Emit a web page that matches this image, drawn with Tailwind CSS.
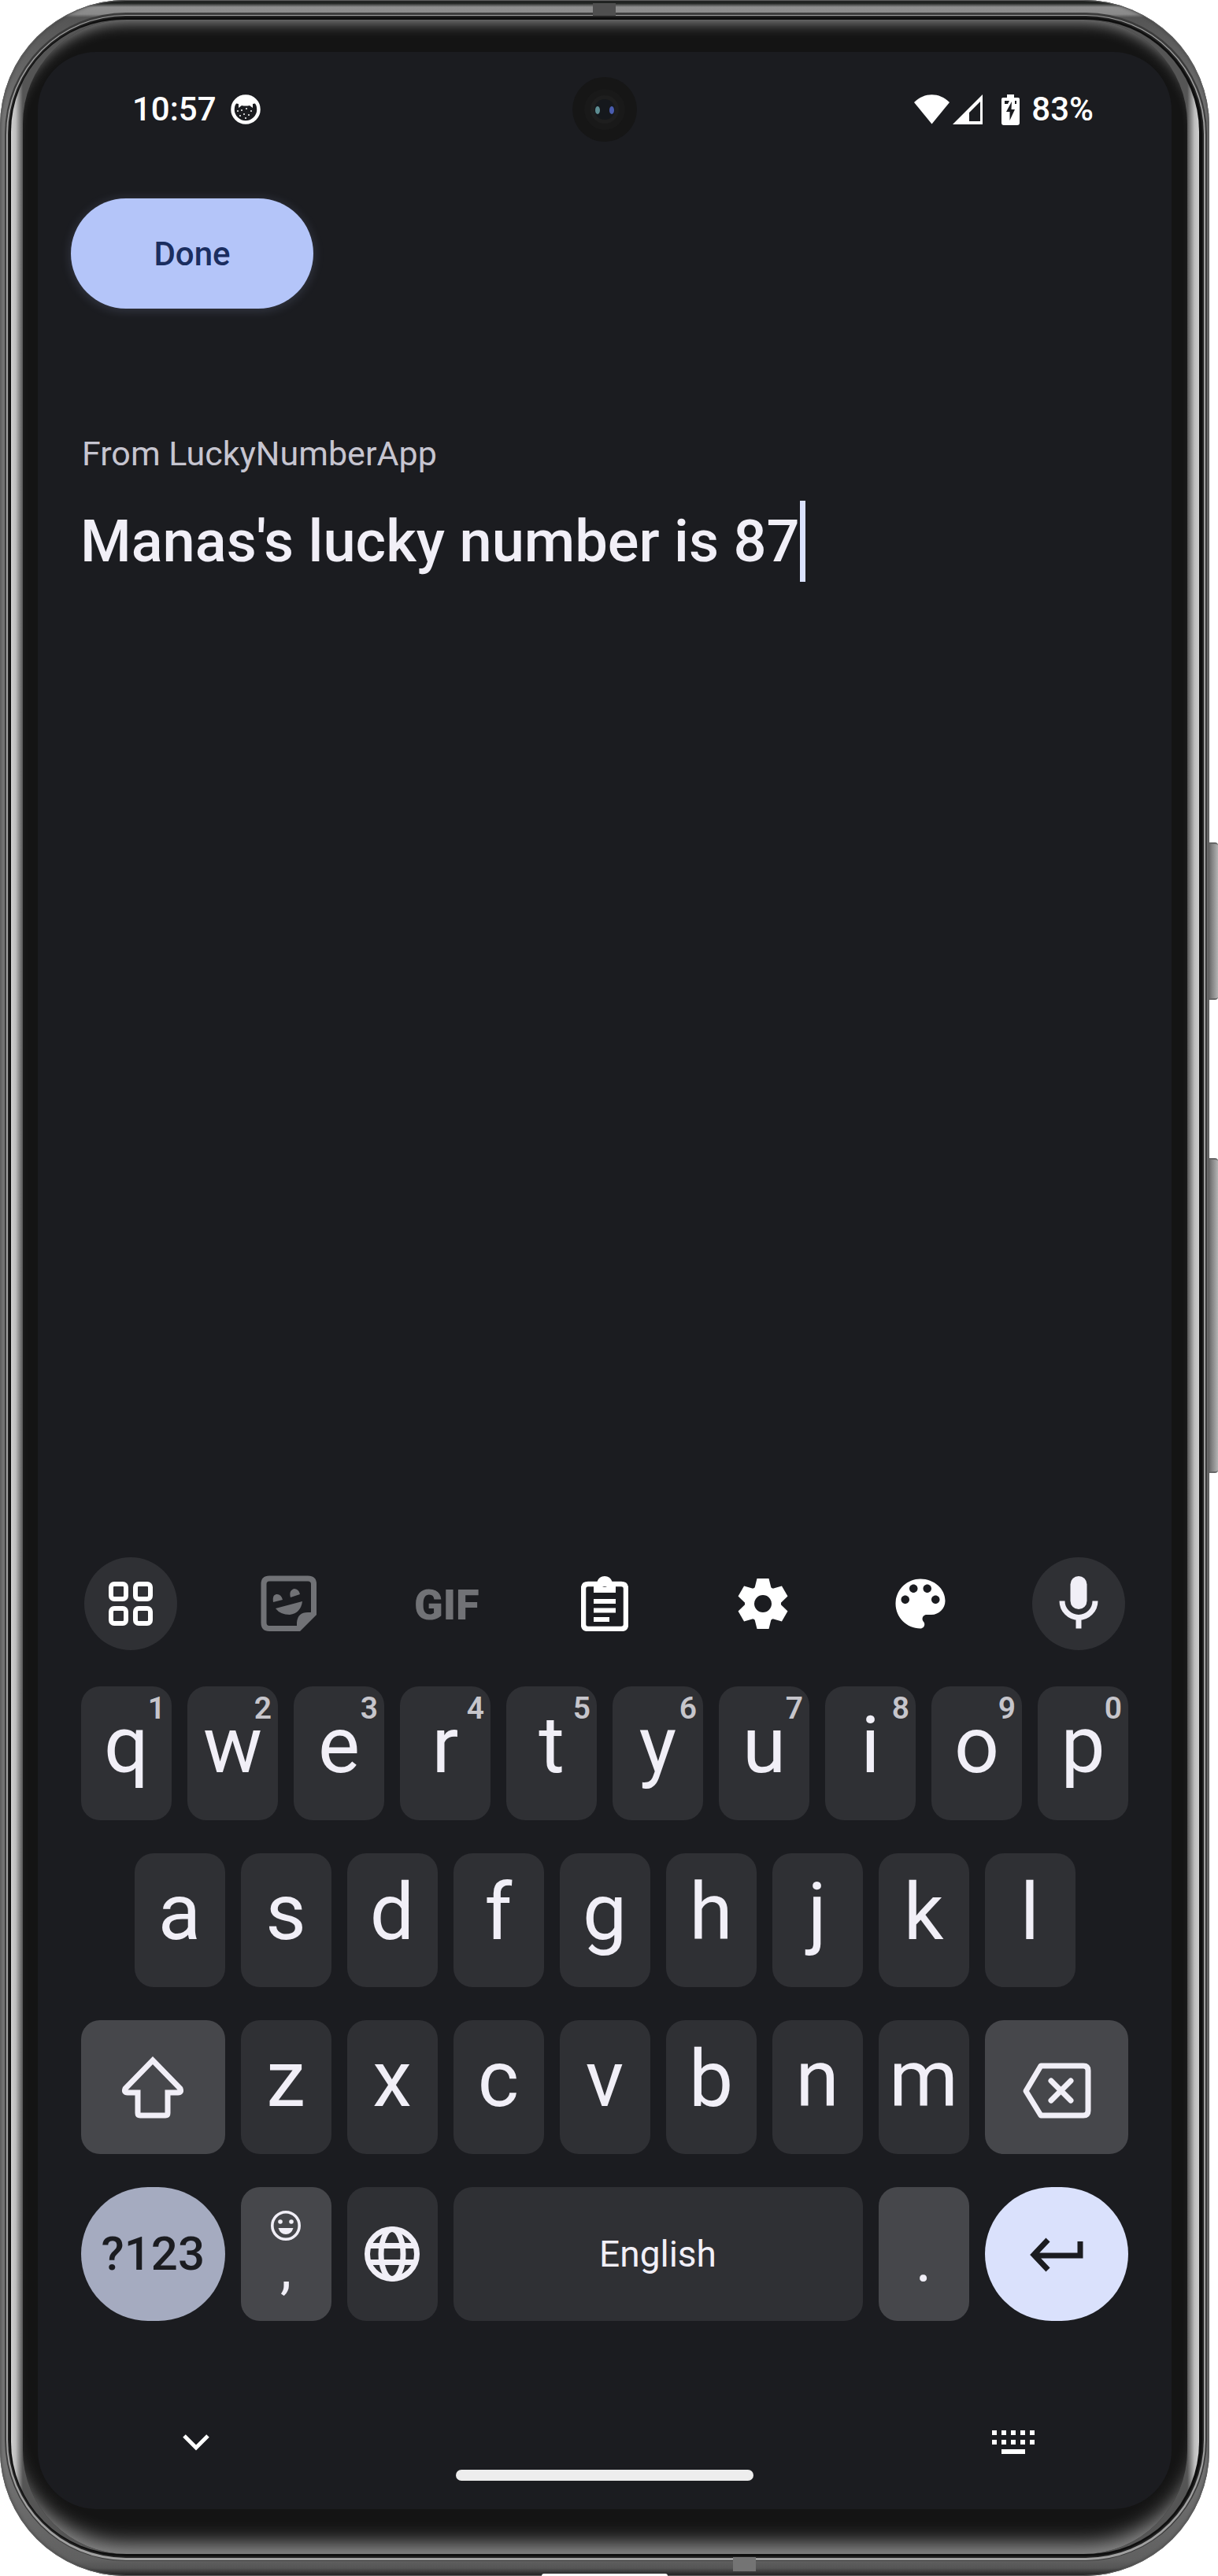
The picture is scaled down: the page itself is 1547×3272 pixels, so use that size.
<!DOCTYPE html>
<html lang="en">
<head>
<meta charset="utf-8">
<meta name="viewport" content="width=device-width, initial-scale=1">
<title>Lucky number note</title>
<script src="https://cdn.jsdelivr.net/npm/@tailwindcss/browser@4"></script>
</head>
<body class="min-h-screen flex flex-col bg-white font-[Roboto,sans-serif] text-[#f1eff7]">
<div class="relative flex-1 flex flex-col pr-[11px]">
  <!-- side buttons -->
  <div class="absolute right-0 top-[1070px] w-[16px] h-[200px] rounded-[4px] bg-linear-to-r from-[#444] via-[#808080] to-[#b4b4b4] border-y-2 border-[#666]"></div>
  <div class="absolute right-0 top-[1471px] w-[16px] h-[400px] rounded-[4px] bg-linear-to-r from-[#444] via-[#808080] to-[#b4b4b4] border-y-2 border-[#666]"></div>

  <!-- metal frame -->
  <div class="relative flex-1 flex flex-col rounded-[160px] pt-[22px] pb-[25px] pl-[12px] pr-[9px] bg-[linear-gradient(180deg,#1f2220_4px,#8f8f8f_9px,#8a8a8a_18px,#555_22px,#757575_150px,#757575_calc(100%-150px),#606060_calc(100%-20px),#555_calc(100%-10px),#1c1c1c_100%)] shadow-[inset_0_0_0_1px_#606060,inset_0_0_4px_#333]">
    <div class="absolute top-[4px] left-[753px] w-[29px] h-[16px] bg-[#4f4f4f]"></div>
    <div class="absolute bottom-[6px] left-[931px] w-[29px] h-[18px] bg-[#747474]"></div>
    <div class="absolute bottom-0 left-[688px] w-[160px] h-[3px] rounded-t-[3px] bg-white"></div>
    <div class="flex-1 flex flex-col rounded-[148px] bg-[#0e0e0e] pt-[3px] pb-[3px] pl-[2px] pr-[4px] shadow-[0_0_0_2px_#222,0_1px_0_4px_#a0a0a0,0_0_0_6px_#3c3c3c]">
      <div class="flex-1 flex flex-col rounded-[142px] px-[15px] bg-[linear-gradient(90deg,#d0d0d0_0,#bdbdbd_6px,#555_15px,#555_calc(100%-15px),#bdbdbd_calc(100%-6px),#d0d0d0_100%)]">
        <div class="flex-1 flex flex-col rounded-[132px] bg-[#141414] pt-[41px] pb-[57px] pl-[19px] pr-[20px] shadow-[inset_0_20px_18px_-16px_#8a8a8a,inset_0_-34px_24px_-20px_#8a8a8a]">

          <!-- screen -->
          <div class="relative flex-1 flex flex-col rounded-[74px] bg-[#1b1c20]">
            <svg class="absolute top-[32px] left-1/2 -translate-x-1/2 w-[82px] h-[82px]" viewBox="0 0 82 82" aria-hidden="true">
              <circle cx="41" cy="41" r="41" fill="#161616"/>
              <circle cx="41" cy="41" r="26" fill="#191919"/>
              <circle cx="41" cy="41" r="18" fill="#1e1e1e"/>
              <circle cx="41" cy="41" r="13" fill="#15181c"/>
              <ellipse cx="32" cy="42" rx="3" ry="5" fill="#5d8d92"/>
              <ellipse cx="50" cy="42" rx="3" ry="5" fill="#4a5cae"/>
            </svg>

            <header class="mt-[32px] h-[82px] pl-[120px] pr-[99px] flex items-center text-white text-[42px] leading-[48px] font-medium">
              <span>10:57</span>
              <svg class="ml-[18px] w-[38px] h-[38px]" viewBox="0 0 38 38" aria-hidden="true">
                <circle cx="19" cy="19" r="16.5" fill="#1b1c20" stroke="#fff" stroke-width="4.5"/>
                <path d="M5 11 Q9 2 19 2 Q29 2 33 11 L28 12 L28 17 L24 14 Q19 15 14 14 L10 17 L10 12 Z" fill="#fff"/>
                <g fill="#fff"><circle cx="14" cy="20" r="1"/><circle cx="20" cy="18" r="1"/><circle cx="26" cy="21" r="1"/><circle cx="9" cy="21" r="1"/><circle cx="17" cy="25" r="1"/><circle cx="23" cy="26" r="1"/><circle cx="12" cy="27" r="1"/><circle cx="19" cy="30" r="1"/></g>
              </svg>
              <svg class="ml-auto w-[45px] h-[38px]" viewBox="0 0 45 38" aria-hidden="true"><path d="M0 10C13-3 32-3 45 10L22.500 37.500Z" fill="#fff"/></svg>
              <svg class="ml-[4px] w-[38px] h-[38px]" viewBox="0 0 38 38" aria-hidden="true"><path fill-rule="evenodd" d="M38 0V38H0ZM35 9L21 23V34H35Z" fill="#fff"/></svg>
              <svg class="ml-[24px] w-[23px] h-[39px]" viewBox="0 0 23 39" aria-hidden="true"><path d="M7 0H16V4H21Q23 4 23 6V36Q23 39 20 39H3Q0 39 0 36V6Q0 4 2 4H7Z" fill="#fff"/><path d="M4 8H10L8 12H4ZM17 8H19V12H17ZM13 9L6 22H10.500V33L17 19H12.500Z" fill="#1b1c20"/></svg>
              <span class="ml-[15px]">83%</span>
            </header>

            <main class="flex-1 flex flex-col items-start">
              <button type="button" class="mt-[72px] ml-[42px] w-[308px] h-[140px] rounded-full bg-[#b4c5f9] text-[#1b2e60] text-[42px] font-medium shadow-[0_2px_14px_#b4c5f930]">Done</button>
              <label for="note" class="mt-[160px] ml-[56px] text-[43px] leading-[48px] text-[#c6c5d0]">From LuckyNumberApp</label>
              <div class="mt-[36px] ml-[54px] flex">
                <input id="note" type="text" value="Manas's lucky number is 87" class="field-sizing-content h-[103px] text-[74px] leading-[103px] font-medium bg-transparent outline-none">
                <span class="w-[7px] h-[103px] bg-[#dae1fc]"></span>
              </div>
            </main>

            <section aria-label="Keyboard" class="px-[55px]">
              <div class="px-[4px] flex justify-between">
                <button type="button" aria-label="Menu" class="w-[118px] h-[118px] rounded-full bg-[#2f3034] flex items-center justify-center">
                  <svg class="w-[56px] h-[56px]" viewBox="0 0 56 56" fill="none" stroke="#fff" stroke-width="6"><rect x="3" y="3" width="19" height="19" rx="4"/><rect x="34" y="3" width="19" height="19" rx="4"/><rect x="3" y="34" width="19" height="19" rx="4"/><rect x="34" y="34" width="19" height="19" rx="4"/></svg>
                </button>
                <button type="button" aria-label="Stickers" class="w-[118px] h-[118px] flex items-center justify-center">
                  <svg class="w-[72px] h-[72px]" viewBox="0 0 72 72"><path d="M11 4H60Q67.500 4 67.500 11V48L48 67.500H11Q4 67.500 4 60V11Q4 4 11 4Z" fill="none" stroke="#717276" stroke-width="7"/><path d="M71 47V50L50 71H46V60Q47 47 60 47ZM16 34C15 27 17 24 21 24Q26 24 28 31ZM38 28C36 21 39 18 43 17Q49 18 50 24ZM19 42L53 33Q51 48 37 50Q25 50 19 42Z" fill="#717276"/></svg>
                </button>
                <button type="button" class="w-[118px] h-[118px] pt-[2px] text-[54px] font-black text-[#717276]">GIF</button>
                <button type="button" aria-label="Clipboard" class="w-[118px] h-[118px] flex items-center justify-center">
                  <svg class="w-[60px] h-[70px]" viewBox="0 0 60 70"><path d="M9 10H51Q57 10 57 16V61Q57 67 51 67H9Q3 67 3 61V16Q3 10 9 10Z" fill="none" stroke="#fff" stroke-width="6.500"/><path fill-rule="evenodd" d="M16 7H20.500Q23 0 30 0Q37 0 39.500 7H44V21H16ZM30 7A3.500 3.500 0 1 0 30 14A3.500 3.500 0 1 0 30 7ZM16 29H44V35H16ZM16 40.500H44V46.500H16ZM16 52H36V58H16Z" fill="#fff"/></svg>
                </button>
                <button type="button" aria-label="Settings" class="w-[118px] h-[118px] flex items-center justify-center">
                  <svg class="w-[64px] h-[64px]" viewBox="-32 -32 64 64" fill="#fff"><defs><path id="tooth" d="M-11 -18L-7.500 -32H7.500L11 -18Z"/></defs><use href="#tooth"/><use href="#tooth" transform="rotate(60)"/><use href="#tooth" transform="rotate(120)"/><use href="#tooth" transform="rotate(180)"/><use href="#tooth" transform="rotate(240)"/><use href="#tooth" transform="rotate(300)"/><circle r="17" fill="none" stroke="#fff" stroke-width="12"/></svg>
                </button>
                <button type="button" aria-label="Themes" class="w-[118px] h-[118px] flex items-center justify-center">
                  <svg class="w-[84px] h-[84px]" viewBox="0 0 24 24" fill="#fff"><path d="M12 3c-4.970 0-9 4.030-9 9s4.030 9 9 9c.83 0 1.500-.67 1.500-1.500 0-.39-.15-.74-.39-1.010-.23-.26-.38-.61-.38-.99 0-.83.67-1.500 1.500-1.500H16c2.760 0 5-2.240 5-5 0-4.420-4.030-8-9-8zm-5.500 9c-.83 0-1.500-.67-1.500-1.500S5.670 9 6.500 9 8 9.670 8 10.500 7.330 12 6.500 12zm3-4C8.670 8 8 7.330 8 6.500S8.670 5 9.500 5s1.500.67 1.500 1.500S10.330 8 9.500 8zm5 0c-.83 0-1.500-.67-1.500-1.500S13.670 5 14.500 5s1.500.67 1.500 1.500S15.330 8 14.500 8zm3 4c-.83 0-1.500-.67-1.500-1.500S16.670 9 17.500 9s1.500.67 1.500 1.500-.67 1.500-1.500 1.500z"/></svg>
                </button>
                <button type="button" aria-label="Voice input" class="w-[118px] h-[118px] rounded-full bg-[#2f3034] flex items-center justify-center">
                  <svg class="w-[84px] h-[84px]" viewBox="0 0 24 24"><rect x="9" y="2" width="6" height="12" rx="3" fill="#f1eff7"/><path d="M6 11A6 6 0 0 0 18 11M12 17V21" fill="none" stroke="#f1eff7" stroke-width="2"/></svg>
                </button>
              </div>

              <div id="keys" class="mt-[46px] grid grid-cols-20 auto-rows-[170px] gap-x-[20px] gap-y-[42px] text-[100px]"></div>
            </section>

            <nav class="mt-[124px] px-[171px] h-[60px] flex justify-between">
              <button type="button" aria-label="Hide keyboard" class="w-[60px] h-[60px] flex items-center justify-center"><svg class="w-[36px] h-[24px]" viewBox="0 0 36 24"><path d="M3 4L18 19L33 4" fill="none" stroke="#fff" stroke-width="5"/></svg></button>
              <button type="button" aria-label="Choose keyboard" class="w-[60px] h-[60px] flex items-center justify-center"><svg class="w-[54px] h-[30px]" viewBox="0 0 54 30"><path d="M0 3H54M0 15H54" stroke="#fff" stroke-width="6" stroke-dasharray="6 6"/><path d="M12 27H42" stroke="#fff" stroke-width="6"/></svg></button>
            </nav>
            <div class="mt-[5px] mb-[36px] mx-auto w-[378px] h-[14px] rounded-[7px] bg-[#ededed]"></div>
          </div>
        </div>
      </div>
    </div>
  </div>
</div>

<script>
const base = 'relative flex items-center justify-center rounded-[24px] ';
const plain = 'bg-[#2f3034] ', raised = 'bg-[#46474b] ';
const grid = document.getElementById('keys');
function key(cls, html, label) {
  const b = document.createElement('button');
  b.type = 'button';
  b.className = base + cls;
  b.innerHTML = html;
  if (label) b.setAttribute('aria-label', label);
  grid.append(b);
}
function letters(row, firstClass, hints) {
  [...row].forEach((c, i) => key(plain + 'col-span-2 pb-[20px] ' + (i ? '' : firstClass),
    c + (hints ? `<span class="absolute top-[8px] right-[8px] text-[39px] leading-[40px] font-semibold text-[#c6c5cb]">${hints[i]}</span>` : '')));
}
letters('qwertyuiop', '', '1234567890');
letters('asdfghjkl', 'col-start-2');
key(raised + 'col-span-3 col-start-1', '<svg class="w-[84px] h-[84px]" viewBox="0 0 84 84"><path d="M42 8L77 44Q79 49 74 49H61V75Q61 78 58 78H26Q23 78 23 75V49H10Q5 49 7 44Z" fill="none" stroke="#f1eff7" stroke-width="7"/></svg>', 'Shift');
letters('zxcvbnm', '');
key(raised + 'col-span-3', '<svg class="w-[88px] h-[80px]" viewBox="0 0 88 80"><path d="M24 13H78Q84 13 84 19V70Q84 76 78 76H24L5 45Z" fill="none" stroke="#f1eff7" stroke-width="7" stroke-linejoin="round"/><path d="M37 32L62 57M62 32L37 57" stroke="#f1eff7" stroke-width="7" stroke-linecap="round"/></svg>', 'Backspace');
key('col-span-3 rounded-full bg-[#a5abc0] text-[#1b1c20] text-[60px] font-medium', '?123');
key(raised + 'col-span-2 flex-col', '<svg class="w-[38px] h-[38px]" viewBox="0 0 38 38"><circle cx="19" cy="19" r="17.200" fill="none" stroke="#f1eff7" stroke-width="3.600"/><circle cx="12" cy="14" r="2.800" fill="#f1eff7"/><circle cx="26" cy="14" r="2.800" fill="#f1eff7"/><path d="M9.500 22H28.500Q26 30 19 30Q12 30 9.500 22Z" fill="#f1eff7"/></svg><span class="text-[72px] leading-[72px]">,</span>', 'Comma');
key(plain + 'col-span-2', '<svg class="w-[84px] h-[84px]" viewBox="0 0 24 24" fill="none" stroke="#f1eff7" stroke-width="2"><circle cx="12" cy="12" r="9"/><ellipse cx="12" cy="12" rx="4" ry="9"/><path d="M3.500 9H20.500M3.500 15H20.500"/></svg>', 'Language');
key(plain + 'col-span-8 text-[46px]', 'English');
key(raised + 'col-span-2 text-[80px] pt-[16px]', '.');
key('col-span-3 rounded-full bg-[#dae1fc]', '<svg class="w-[68px] h-[48px]" viewBox="0 0 68 48"><path d="M23 6L5 25L23 44M5 26H64V8" fill="none" stroke="#1b1c20" stroke-width="7"/></svg>', 'Enter');
</script>
</body>
</html>
